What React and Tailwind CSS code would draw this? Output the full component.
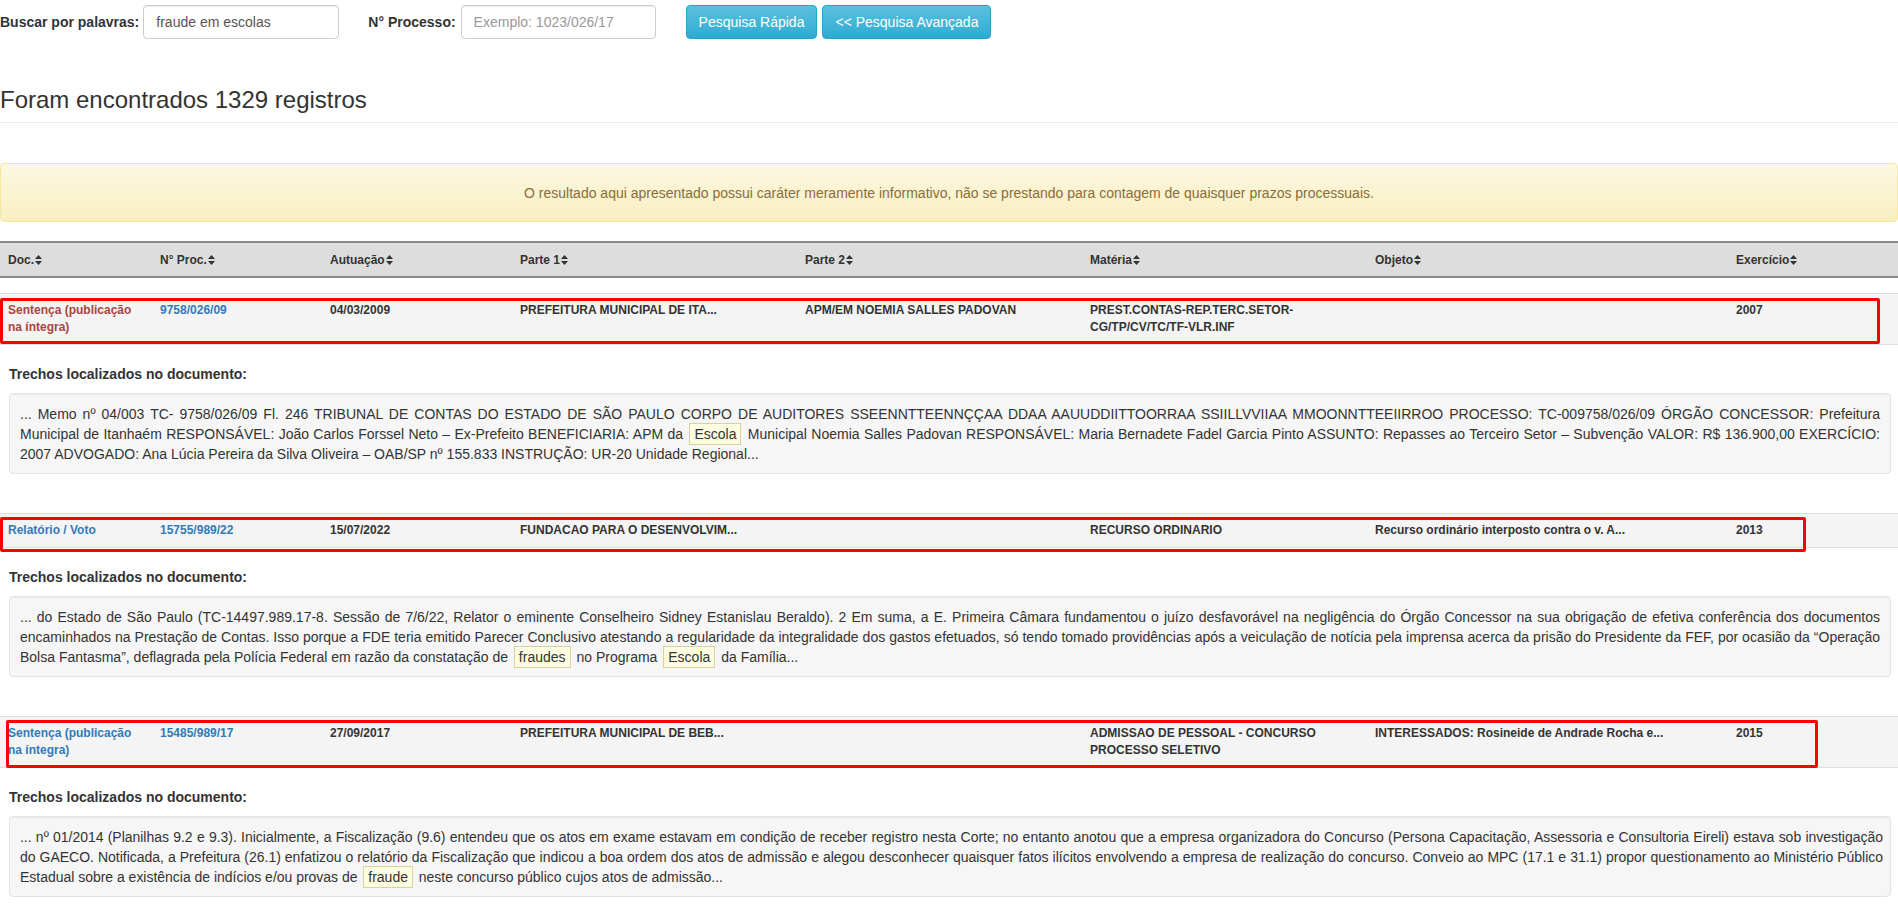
import React from "react";

const cols = "grid grid-cols-[152px_170px_190px_285px_285px_285px_361px_1fr]";

function SortIcon() {
  return (
    <svg width="7" height="10" viewBox="0 0 7 10" className="ml-[1px] inline-block">
      <path d="M3.5 0 L7 4 L0 4 Z" fill="#333" />
      <path d="M0 6 L7 6 L3.5 10 Z" fill="#333" />
    </svg>
  );
}

function Hl({ children }) {
  return (
    <span className="mx-[2px] border border-[#d9d39a] bg-[#fdfde1] px-[4px] py-[2px]">{children}</span>
  );
}

const registros = [
  {
    doc: "Sentença (publicação na íntegra)",
    docCls: "text-[#a94442]",
    proc: "9758/026/09",
    autuacao: "04/03/2009",
    parte1: "PREFEITURA MUNICIPAL DE ITA...",
    parte2: "APM/EM NOEMIA SALLES PADOVAN",
    materia: ["PREST.CONTAS-REP.TERC.SETOR-", "CG/TP/CV/TC/TF-VLR.INF"],
    objeto: "",
    exercicio: "2007",
    caixa: "top-[4px] left-0 w-[1880px] h-[46px]",
    ajuste: "pr-[10px]",
    trecho: [
      "... Memo nº 04/003 TC- 9758/026/09 Fl. 246 TRIBUNAL DE CONTAS DO ESTADO DE SÃO PAULO CORPO DE AUDITORES SSEENNTTEENNÇÇAA DDAA AAUUDDIITTOORRAA SSIILLVVIIAA MMOONNTTEEIIRROO PROCESSO: TC-009758/026/09 ÓRGÃO CONCESSOR: Prefeitura Municipal de Itanhaém RESPONSÁVEL: João Carlos Forssel Neto – Ex-Prefeito BENEFICIARIA: APM da ",
      { hl: "Escola" },
      " Municipal Noemia Salles Padovan RESPONSÁVEL: Maria Bernadete Fadel Garcia Pinto ASSUNTO: Repasses ao Terceiro Setor – Subvenção VALOR: R$ 136.900,00 EXERCÍCIO: 2007 ADVOGADO: Ana Lúcia Pereira da Silva Oliveira – OAB/SP nº 155.833 INSTRUÇÃO: UR-20 Unidade Regional...",
    ],
  },
  {
    doc: "Relatório / Voto",
    docCls: "text-[#337ab7]",
    proc: "15755/989/22",
    autuacao: "15/07/2022",
    parte1: "FUNDACAO PARA O DESENVOLVIM...",
    parte2: "",
    materia: ["RECURSO ORDINARIO"],
    objeto: "Recurso ordinário interposto contra o v. A...",
    exercicio: "2013",
    caixa: "top-[3px] left-0 w-[1806px] h-[35px]",
    ajuste: "pr-[10px]",
    trecho: [
      "... do Estado de São Paulo (TC-14497.989.17-8. Sessão de 7/6/22, Relator o eminente Conselheiro Sidney Estanislau Beraldo). 2 Em suma, a E. Primeira Câmara fundamentou o juízo desfavorável na negligência do Órgão Concessor na sua obrigação de efetiva conferência dos documentos encaminhados na Prestação de Contas. Isso porque a FDE teria emitido Parecer Conclusivo atestando a regularidade da integralidade dos gastos efetuados, só tendo tomado providências após a veiculação de notícia pela imprensa acerca da prisão do Presidente da FEF, por ocasião da “Operação Bolsa Fantasma”, deflagrada pela Polícia Federal em razão da constatação de ",
      { hl: "fraudes" },
      " no Programa ",
      { hl: "Escola" },
      " da Família...",
    ],
  },
  {
    doc: "Sentença (publicação na íntegra)",
    docCls: "text-[#337ab7]",
    proc: "15485/989/17",
    autuacao: "27/09/2017",
    parte1: "PREFEITURA MUNICIPAL DE BEB...",
    parte2: "",
    materia: ["ADMISSAO DE PESSOAL - CONCURSO PROCESSO SELETIVO"],
    objeto: "INTERESSADOS: Rosineide de Andrade Rocha e...",
    exercicio: "2015",
    caixa: "top-[3px] left-[6px] w-[1812px] h-[48px]",
    ajuste: "pr-[7px] tracking-[-0.02px]",
    trecho: [
      "... nº 01/2014 (Planilhas 9.2 e 9.3). Inicialmente, a Fiscalização (9.6) entendeu que os atos em exame estavam em condição de receber registro nesta Corte; no entanto anotou que a empresa organizadora do Concurso (Persona Capacitação, Assessoria e Consultoria Eireli) estava sob investigação do GAECO. Notificada, a Prefeitura (26.1) enfatizou o relatório da Fiscalização que indicou a boa ordem dos atos de admissão e alegou desconhecer quaisquer fatos ilícitos envolvendo a empresa de realização do concurso. Conveio ao MPC (17.1 e 31.1) propor questionamento ao Ministério Público Estadual sobre a existência de indícios e/ou provas de ",
      { hl: "fraude" },
      " neste concurso público cujos atos de admissão...",
    ],
  },
];

const cabecalho = ["Doc.", "N° Proc.", "Autuação", "Parte 1", "Parte 2", "Matéria", "Objeto", "Exercício"];

export default function App() {
  return (
    <div className="min-h-screen bg-white text-[#333] font-['Liberation_Sans',Arial,sans-serif] text-[14px] leading-[20px]">
      {/* barra de busca */}
      <div className="flex items-center pt-[5px]">
        <label className="font-bold">Buscar por palavras:</label>
        <input
          type="text"
          defaultValue="fraude em escolas"
          className="ml-[4px] h-[34px] w-[196px] rounded-[4px] border border-[#ccc] px-3 text-[#555] shadow-[inset_0_1px_1px_rgba(0,0,0,0.075)] outline-none"
        />
        <label className="ml-[29px] font-bold">N° Processo:</label>
        <input
          type="text"
          placeholder="Exemplo: 1023/026/17"
          className="ml-[5px] h-[34px] w-[195px] rounded-[4px] border border-[#ccc] px-3 text-[#555] placeholder:text-[#999] shadow-[inset_0_1px_1px_rgba(0,0,0,0.075)] outline-none"
        />
        <button className="ml-[30px] h-[34px] rounded-[4px] border border-[#28a4c9] bg-gradient-to-b from-[#5bc0de] to-[#2aabd2] px-3 text-white">
          Pesquisa Rápida
        </button>
        <button className="ml-[5px] h-[34px] rounded-[4px] border border-[#28a4c9] bg-gradient-to-b from-[#5bc0de] to-[#2aabd2] px-3 text-white">
          &lt;&lt; Pesquisa Avançada
        </button>
      </div>

      {/* titulo */}
      <div className="mt-[48px] border-b border-[#eee] pb-[9px]">
        <h3 className="text-[24px] leading-[26px] font-medium">Foram encontrados 1329 registros</h3>
      </div>

      <div className="mt-[40px] flex h-[59px] items-center justify-center rounded-[4px] border border-[#f5e79e] bg-gradient-to-b from-[#fcf8e3] to-[#f8efc0] text-[#8a6d3b]">
        O resultado aqui apresentado possui caráter meramente informativo, não se prestando para contagem de quaisquer prazos processuais.
      </div>

      {/* cabecalho da tabela */}
      <div className={`${cols} mt-[19px] h-[37px] items-center border-y-2 border-[#8a8a8a] bg-[#ddd] text-[12px] font-bold`}>
        {cabecalho.map((c) => (
          <div key={c} className="flex items-center px-2">
            {c}
            <SortIcon />
          </div>
        ))}
      </div>

      <div className="mt-[15px] flex flex-col gap-[39px]">
        {registros.map((r, i) => (
          <div key={i}>
            <div className={`${cols} relative border-y border-[#ddd] bg-[#f4f4f4] text-[12px] leading-[17px] font-bold`}>
              <div className={`p-2 ${r.docCls}`}>{r.doc}</div>
              <div className="p-2 text-[#337ab7]">{r.proc}</div>
              <div className="p-2">{r.autuacao}</div>
              <div className="p-2">{r.parte1}</div>
              <div className="p-2">{r.parte2}</div>
              <div className="p-2">
                {r.materia.map((m, j) => (
                  <div key={j}>{m}</div>
                ))}
              </div>
              <div className="p-2">{r.objeto}</div>
              <div className="p-2">{r.exercicio}</div>
              <div className={`pointer-events-none absolute rounded-[2px] border-[3px] border-[#ff0000] ${r.caixa}`}></div>
            </div>
            <div className="mt-[19px] pl-[9px] font-bold">Trechos localizados no documento:</div>
            <div className={`mt-[9px] ml-[9px] mr-[7px] rounded-[4px] border border-[#e3e3e3] bg-[#f6f6f6] pt-[10px] pb-[9px] pl-[10px] text-justify shadow-[inset_0_1px_1px_rgba(0,0,0,0.05)] ${r.ajuste}`}>
              {r.trecho.map((t, j) => (typeof t === "string" ? <span key={j}>{t}</span> : <Hl key={j}>{t.hl}</Hl>))}
            </div>
          </div>
        ))}
      </div>
    </div>
  );
}
